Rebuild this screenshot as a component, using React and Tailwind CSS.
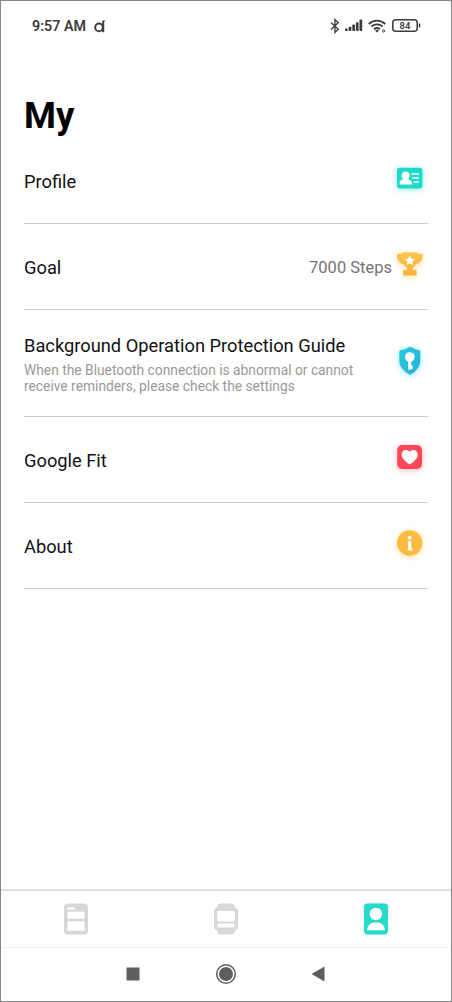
const ProfileIcon = () => (
  <svg viewBox="0 0 36 36" className="size-9 overflow-visible drop-shadow-[0_1px_3px_rgba(40,225,210,0.5)]">
    <rect x="5" y="7.8" width="25.4" height="20.6" rx="3" fill="#20dac9" />
    <circle cx="13.6" cy="15.5" r="3.9" fill="#fff" />
    <path d="M11.6 17h4v2c3 .7 4.400 2.200 4.600 5.500H7.500c.2-3.300 1.300-4.800 4.100-5.500z" fill="#fff" />
    <path d="M19.3 14h7.5M20.3 18h6.5M21.3 22h5.5" stroke="#fff" strokeWidth="1.7" />
  </svg>
);

const TrophyIcon = () => (
  <svg viewBox="0 0 36 36" className="size-9 overflow-visible drop-shadow-[0_2px_3px_rgba(255,200,70,0.45)]">
    <defs>
      <linearGradient id="trophy" x1="0" y1="0" x2="0" y2="1">
        <stop offset="0" stopColor="#ffc552" />
        <stop offset="1" stopColor="#f7b236" />
      </linearGradient>
    </defs>
    <path
      d="M10 7q0-.7.8-.7h14q.8 0 .8.7v.7h4q1.2 0 1.200 1.200c0 5-2.400 8.600-7 9.200-1 1.800-2 3-3 3.600v2.200h2.800q1 0 1 1v3.800q0 .8-.8.8H12q-.8 0-.8-.8v-3.800q0-1 1-1H15v-2.200c-1-.6-2.200-1.800-3.200-3.600-4.600-.6-7-4.200-7-9.200q0-1.200 1.200-1.200h4z"
      fill="url(#trophy)"
    />
    <path d="M17.8 10l1.400 2.900 3.100.4-2.300 2.200.6 3.100-2.800-1.500-2.800 1.500.6-3.100-2.300-2.200 3.100-.4z" fill="#fff" stroke="#fff" strokeWidth=".6" strokeLinejoin="round" />
  </svg>
);

const ShieldIcon = () => (
  <svg viewBox="0 0 36 36" className="size-9 overflow-visible drop-shadow-[0_1px_3px_rgba(50,215,240,0.55)]">
    <defs>
      <linearGradient id="shield" x1="0" y1="0" x2="1" y2="1">
        <stop offset="0" stopColor="#27cbe0" />
        <stop offset="1" stopColor="#28b0d8" />
      </linearGradient>
    </defs>
    <path d="M17.6 4q.6-.2 1.100 0c3 1.600 5.800 2.700 8.700 3.300q.9.200.9 1.100v9.100c0 6.500-4.200 10.700-9.600 14.100q-.6.4-1.200 0C12 28.200 7.300 24 7.300 17.500V8.400q0-.9.9-1.100C11.500 6.700 14.800 5.600 17.600 4z" fill="url(#shield)" />
    <circle cx="17.8" cy="14" r="4.8" fill="#fff" />
    <path d="M16.200 18h3v4.400h1.500v3.600h-1.500v.8h-3z" fill="#fff" />
  </svg>
);

const HeartIcon = () => (
  <svg viewBox="0 0 36 36" className="size-9 overflow-visible drop-shadow-[0_1px_3px_rgba(255,90,90,0.45)]">
    <rect x="5.2" y="6" width="24.8" height="24" rx="5" fill="#fc4857" />
    <path d="M17.700 25.400c-.5 0-5-3.600-6.600-5.700-3.100-4.200-.8-8.700 2.500-8.700 1.800 0 3.300.5 4.100 1.800.8-1.300 2.300-1.800 4.100-1.800 3.300 0 5.600 4.500 2.500 8.700-1.600 2.100-6.100 5.700-6.600 5.700z" fill="#fff" />
  </svg>
);

const InfoIcon = () => (
  <svg viewBox="0 0 36 36" className="size-9 overflow-visible drop-shadow-[0_1px_3px_rgba(255,195,60,0.5)]">
    <circle cx="17.7" cy="18" r="12.7" fill="#fdbb40" />
    <circle cx="17.6" cy="12.8" r="2" fill="#fff" />
    <path d="M15.6 16.300h3.700v7.700h1v1.500h-4.700V24h.5v-6.200h-.5z" fill="#fff" />
  </svg>
);

const items = [
  { title: "Profile", icon: <ProfileIcon /> },
  { title: "Goal", value: "7000 Steps", icon: <TrophyIcon /> },
  {
    title: "Background Operation Protection Guide",
    description: "When the Bluetooth connection is abnormal or cannot receive reminders, please check the settings",
    icon: <ShieldIcon />,
  },
  { title: "Google Fit", icon: <HeartIcon /> },
  { title: "About", icon: <InfoIcon /> },
];

const StatusBar = () => (
  <div className="flex h-[50px] items-center justify-between pl-[31px] pr-[30px] text-[#3c3c3c]">
    <div className="flex items-center gap-[8px]">
      <span className="pb-px text-[14.3px] font-semibold leading-5">9:57 AM</span>
      <svg viewBox="0 0 12 14" className="h-[14px] w-[12px]" fill="none" stroke="currentColor" strokeWidth="2">
        <circle cx="5" cy="8.4" r="3.8" />
        <path d="M9.2 1.500v11.700" />
        <path d="M9.200 3.700l1.500-2.200" strokeWidth="1" />
      </svg>
    </div>
    <div className="flex items-center pb-px">
      <svg viewBox="0 0 10 16" className="h-4 w-[10px]" fill="none" stroke="currentColor" strokeWidth="1.3">
        <path d="M1 4.500l7.200 6.800L4.900 14.400V1.600l3.300 3.100L1 11.500" />
      </svg>
      <svg viewBox="0 0 18 13" className="ml-[5px] h-[13px] w-[18px]" fill="currentColor">
        <rect x="0" y="9.5" width="2.7" height="2.5" rx=".8" />
        <rect x="3.7" y="7.7" width="2.7" height="4.3" rx=".8" />
        <rect x="7.3" y="5.5" width="2.7" height="6.5" rx=".8" />
        <rect x="10.9" y="3.2" width="2.7" height="8.8" rx=".8" />
        <rect x="14.5" y=".5" width="2.7" height="11.5" rx=".8" />
      </svg>
      <svg viewBox="0 0 18 14" className="ml-[5px] h-[14px] w-[18px]" fill="none" stroke="currentColor" strokeWidth="1.8">
        <path d="M.8 5c4.600-4.400 11.800-4.400 16.400 0M3.400 7.700c3.200-3 8-3 11.200 0M6 10.200c1.800-1.500 4.200-1.500 6 0" />
        <path d="M7 11.500q2-1.300 4 0l-2 2z" fill="currentColor" stroke="none" />
        <circle cx="15.6" cy="12" r="1.1" strokeWidth="1" />
      </svg>
      <svg viewBox="0 0 29 13" className="ml-[6px] h-[13px] w-[29px]">
        <rect x=".8" y=".8" width="24.4" height="11.4" rx="3" fill="#fff" stroke="currentColor" strokeWidth="1.5" />
        <rect x="26.8" y="4.5" width="1.5" height="4" fill="currentColor" />
        <text x="13" y="10" textAnchor="middle" textLength="11" fontSize="9.5" fontWeight="600" fill="currentColor">84</text>
      </svg>
    </div>
  </div>
);

const MenuItem = ({ title, value, description, icon }) => (
  <div
    className={`flex items-center border-b border-[#cecece] ${description ? "h-[107px]" : "h-[86px]"}`}
  >
    <div className="flex-1 pt-[2px]">
      <h2 className="whitespace-nowrap text-[18.3px] leading-6 text-[#111]">{title}</h2>
      {description && (
        <p className="mt-[4px] w-[345px] text-[13.8px] leading-4 text-[#999]">{description}</p>
      )}
    </div>
    {value && <span className="pt-[2px] text-[16.5px] leading-6 text-[#747474]">{value}</span>}
    <div className="mb-[5px] shrink-0">{icon}</div>
  </div>
);

const TabBar = () => (
  <nav className="flex h-[58px] items-center border-t-2 border-[#dfdfdf]">
    <button className="flex flex-1 justify-center">
      <svg viewBox="0 0 26 32" className="h-8 w-[26px]">
        <rect x="1" y=".5" width="24" height="31" rx="4" fill="#d8d8d8" />
        <path d="M4.500 8.700h17v7h-17zM4.500 18.200h17v9.500h-17z" fill="#fff" />
        <path d="M5 5.500h6.500" stroke="#fff" strokeWidth="1.8" strokeLinecap="round" />
      </svg>
    </button>
    <button className="flex flex-1 justify-center">
      <svg viewBox="0 0 26 32" className="h-8 w-[26px]">
        <path d="M7 .5h12q1.500 0 2 1.500l1 2.500q3 .5 3 3.500v16q0 3-3 3.500L21 30q-.5 1.500-2 1.500H7q-1.500 0-2-1.500l-1-2.500q-3-.5-3-3.500V8q0-3 3-3.500L5 2Q5.500.5 7 .5z" fill="#d8d8d8" />
        <rect x="4.2" y="8" width="17.6" height="10.5" rx="1.2" fill="#fff" />
        <rect x="4.2" y="20.5" width="17.6" height="4" rx="1.8" fill="#fff" />
      </svg>
    </button>
    <button className="flex flex-1 justify-center">
      <svg viewBox="0 0 26 32" className="h-8 w-[26px] overflow-visible drop-shadow-[0_0_1px_rgba(45,220,205,0.4)]">
        <rect x="1" y=".5" width="24" height="31" rx="4" fill="#28dacb" />
        <circle cx="12.9" cy="11" r="6.2" fill="#fff" />
        <path d="M4.200 27.300c0-5 3.500-8 8.800-8s8.800 3 8.800 8z" fill="#fff" />
      </svg>
    </button>
  </nav>
);

const SystemNav = () => (
  <div className="flex h-[54px] items-center justify-center gap-[75px] border-t border-[#f3f3f3] pr-[2px] pb-px text-[#5f5f5f]">
    <svg viewBox="0 0 14 14" className="size-[14px]">
      <rect x=".5" y=".5" width="13" height="13" fill="currentColor" />
    </svg>
    <svg viewBox="0 0 22 22" className="-mr-[1px] size-[22px]">
      <circle cx="11" cy="11" r="9.3" fill="none" stroke="currentColor" strokeWidth="1.5" />
      <circle cx="11" cy="11" r="7" fill="currentColor" />
    </svg>
    <svg viewBox="0 0 14 16" className="h-4 w-[14px]">
      <path d="M.5 8L13.500.5v15z" fill="currentColor" />
    </svg>
  </div>
);

const App = () => {
  return (
    <div className="flex h-[1002px] w-[452px] flex-col border border-[#858585] bg-white font-['Roboto',sans-serif]">
      <StatusBar />
      <main className="flex-1 px-[23px]">
        <h1 className="flex h-[87px] items-end pb-px text-[36.5px] font-bold leading-[42px] text-black">My</h1>
        {items.map((item) => (
          <MenuItem key={item.title} {...item} />
        ))}
      </main>
      <TabBar />
      <SystemNav />
    </div>
  );
};

export default App;
